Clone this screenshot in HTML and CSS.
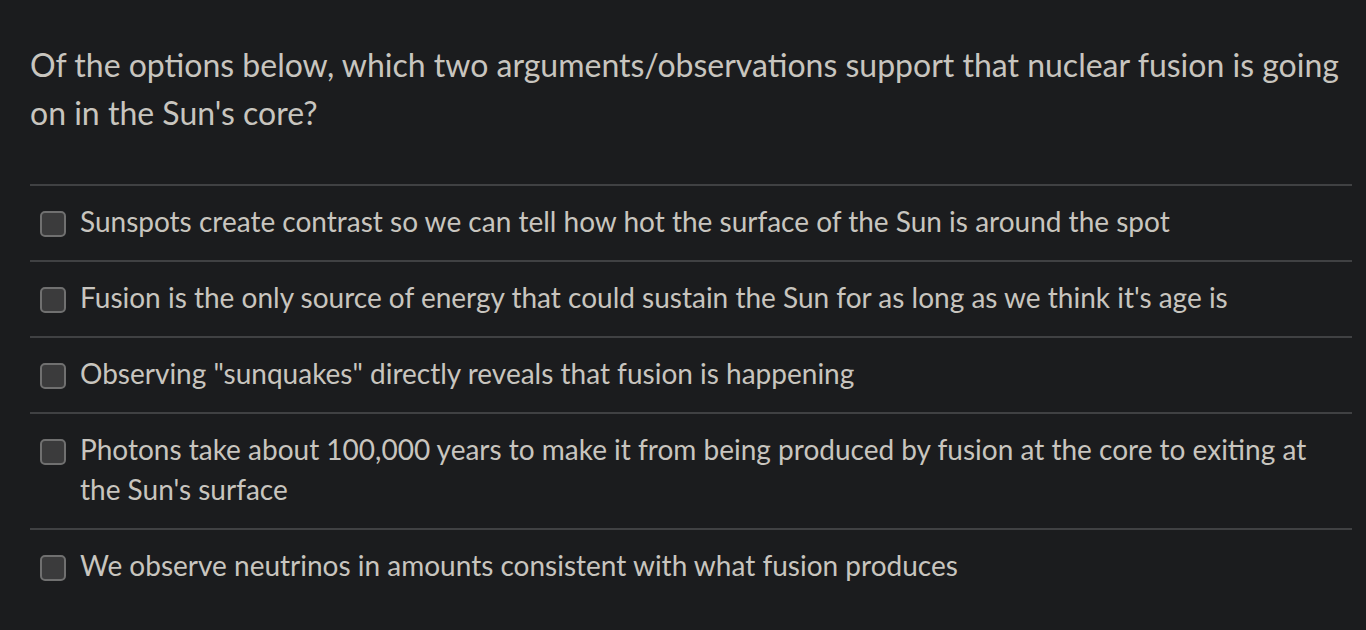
FILE: index.html
```html
<!DOCTYPE html>
<html>
<head>
<meta charset="utf-8">
<link rel="stylesheet" href="styles.css">
</head>
<body>
<div class="quiz">
  <p class="question">Of the options below, which two arguments/observations support that nuclear fusion is going on in the Sun's core?</p>
  <ul class="options">
    <li class="option"><span class="box"></span><span class="label">Sunspots create contrast so we can tell how hot the surface of the Sun is around the spot</span></li>
    <li class="option"><span class="box"></span><span class="label">Fusion is the only source of energy that could sustain the Sun for as long as we think it's age is</span></li>
    <li class="option"><span class="box"></span><span class="label">Observing "sunquakes" directly reveals that fusion is happening</span></li>
    <li class="option"><span class="box"></span><span class="label">Photons take about 100,000 years to make it from being produced by fusion at the core to exiting at the Sun's surface</span></li>
    <li class="option"><span class="box"></span><span class="label">We observe neutrinos in amounts consistent with what fusion produces</span></li>
  </ul>
</div>
</body>
</html>
```
FILE: styles.css
```css
html, body {
  margin: 0;
  padding: 0;
  background: #1b1c1e;
}
body {
  font-family: Lato, "Open Sans", sans-serif;
  color: #c8c5bf;
}
.quiz {
  padding: 41px 14px 0 30px;
}
.question {
  margin: 0 0 47px 0;
  font-size: 32px;
  line-height: 48px;
}
.options {
  list-style: none;
  margin: 0;
  padding: 0;
}
.option {
  display: flex;
  align-items: flex-start;
  gap: 14px;
  border-top: 2px solid #404143;
  padding: 15px 0 19px 10px;
  font-size: 28px;
  line-height: 40px;
}
.box {
  flex: none;
  width: 22px;
  height: 22px;
  margin-top: 10px;
  border: 2px solid #707070;
  border-radius: 5px;
  background: #3b3b3c;
}
.label {
  flex: 1;
}
```
